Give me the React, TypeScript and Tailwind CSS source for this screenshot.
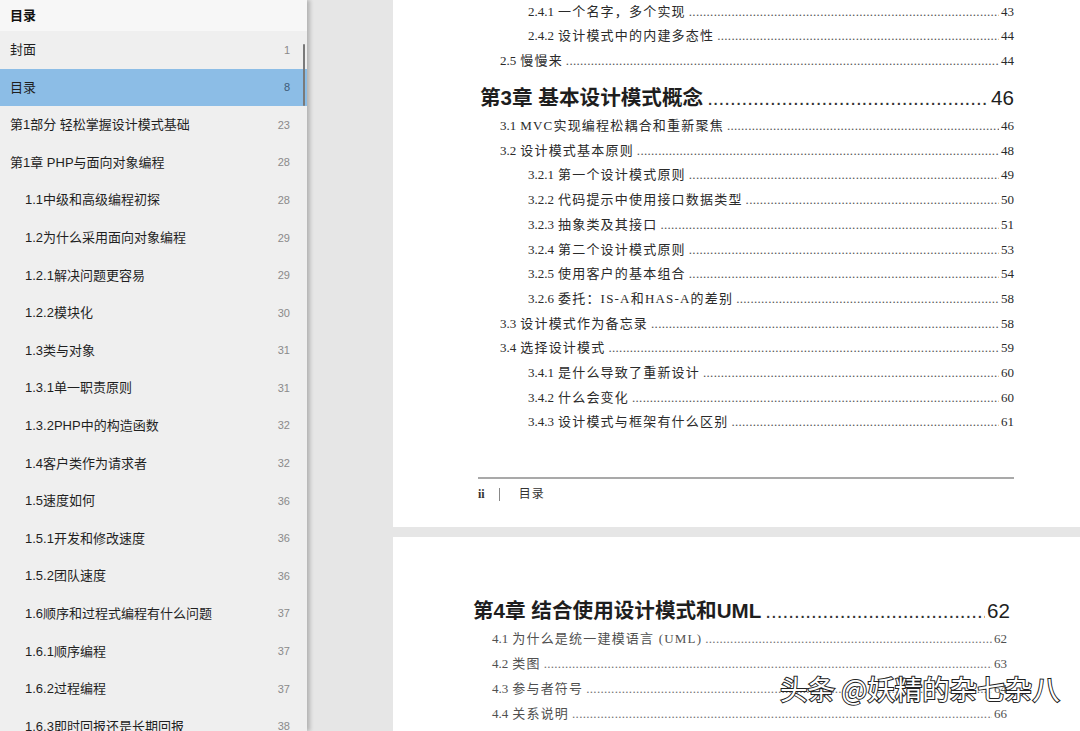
import React from "react";

const SANS = "font-['Segoe_UI','Liberation_Sans','Noto_Sans_CJK_SC',sans-serif]";
const SERIF = "font-['Liberation_Serif','Noto_Sans_CJK_SC',serif]";

const outline = [
  { title: "封面", page: 1, level: 0 },
  { title: "目录", page: 8, level: 0, active: true },
  { title: "第1部分 轻松掌握设计模式基础", page: 23, level: 0 },
  { title: "第1章 PHP与面向对象编程", page: 28, level: 0 },
  { title: "1.1中级和高级编程初探", page: 28, level: 1 },
  { title: "1.2为什么采用面向对象编程", page: 29, level: 1 },
  { title: "1.2.1解决问题更容易", page: 29, level: 1 },
  { title: "1.2.2模块化", page: 30, level: 1 },
  { title: "1.3类与对象", page: 31, level: 1 },
  { title: "1.3.1单一职责原则", page: 31, level: 1 },
  { title: "1.3.2PHP中的构造函数", page: 32, level: 1 },
  { title: "1.4客户类作为请求者", page: 32, level: 1 },
  { title: "1.5速度如何", page: 36, level: 1 },
  { title: "1.5.1开发和修改速度", page: 36, level: 1 },
  { title: "1.5.2团队速度", page: 36, level: 1 },
  { title: "1.6顺序和过程式编程有什么问题", page: 37, level: 1 },
  { title: "1.6.1顺序编程", page: 37, level: 1 },
  { title: "1.6.2过程编程", page: 37, level: 1 },
  { title: "1.6.3即时回报还是长期回报", page: 38, level: 1 },
];

const DOTS = ".".repeat(200);

type Entry = { num: string; title: string; page: number; level: number };

const page1: Entry[] = [
  { num: "2.4.1", title: "一个名字，多个实现", page: 43, level: 2 },
  { num: "2.4.2", title: "设计模式中的内建多态性", page: 44, level: 2 },
  { num: "2.5", title: "慢慢来", page: 44, level: 1 },
];

const page1b: Entry[] = [
  { num: "3.1", title: "MVC实现编程松耦合和重新聚焦", page: 46, level: 1 },
  { num: "3.2", title: "设计模式基本原则", page: 48, level: 1 },
  { num: "3.2.1", title: "第一个设计模式原则", page: 49, level: 2 },
  { num: "3.2.2", title: "代码提示中使用接口数据类型", page: 50, level: 2 },
  { num: "3.2.3", title: "抽象类及其接口", page: 51, level: 2 },
  { num: "3.2.4", title: "第二个设计模式原则", page: 53, level: 2 },
  { num: "3.2.5", title: "使用客户的基本组合", page: 54, level: 2 },
  { num: "3.2.6", title: "委托：IS-A和HAS-A的差别", page: 58, level: 2 },
  { num: "3.3", title: "设计模式作为备忘录", page: 58, level: 1 },
  { num: "3.4", title: "选择设计模式", page: 59, level: 1 },
  { num: "3.4.1", title: "是什么导致了重新设计", page: 60, level: 2 },
  { num: "3.4.2", title: "什么会变化", page: 60, level: 2 },
  { num: "3.4.3", title: "设计模式与框架有什么区别", page: 61, level: 2 },
];

const page2: Entry[] = [
  { num: "4.1", title: "为什么是统一建模语言 (UML)", page: 62, level: 1 },
  { num: "4.2", title: "类图", page: 63, level: 1 },
  { num: "4.3", title: "参与者符号", page: 64, level: 1 },
  { num: "4.4", title: "关系说明", page: 66, level: 1 },
];

const TocLine = ({ e, indent, h }: { e: Entry; indent: string; h: string }) => (
  <div className={`flex items-center ${h} ${indent} ${SERIF} text-[13px]`}>
    <span className="whitespace-nowrap">{e.num}</span>
    <span className="ml-[4px] whitespace-nowrap tracking-[1.2px]">{e.title}</span>
    <span className="ml-[3px] mr-[2px] w-0 min-w-0 flex-1 overflow-hidden whitespace-nowrap opacity-80 tracking-[0.3px]">
      {DOTS}
    </span>
    <span className="whitespace-nowrap">{e.page}</span>
  </div>
);

const Heading = ({ label, page, className }: { label: string; page: number; className: string }) => (
  <div className={`flex items-center h-[30px] ${className} font-['Liberation_Sans','Noto_Sans_CJK_SC',sans-serif] text-[20.6px] font-bold text-[#1e1e1e]`}>
    <span className="whitespace-nowrap">{label}</span>
    <span className="ml-[4px] mr-[2px] w-0 min-w-0 flex-1 overflow-hidden whitespace-nowrap font-normal text-[#333]">{DOTS}</span>
    <span className="whitespace-nowrap font-normal">{page}</span>
  </div>
);

export default function App() {
  return (
    <div className="flex h-[731px] w-[1080px] overflow-hidden bg-[#e6e6e6]">
      {/* Sidebar outline */}
      <aside className={`relative z-10 w-[307px] shrink-0 overflow-hidden bg-[#efefef] shadow-[3px_0_4px_rgba(0,0,0,0.22)] ${SANS}`}>
        <div className="flex h-[31px] items-center bg-[#f7f7f7] pl-[10px] text-[13px] font-bold text-[#111]">
          目录
        </div>
        {outline.map((item) => (
          <div
            key={item.title}
            className={`flex h-[37.6px] items-center pr-[17px] ${item.level ? "pl-[25px]" : "pl-[10px]"} ${
              item.active ? "bg-[#8cbde6]" : ""
            }`}
          >
            <span className="flex-1 whitespace-nowrap text-[13px] text-[#1f1f1f]">{item.title}</span>
            <span className={`text-[11px] ${item.active ? "text-[#3d5b78]" : "text-[#8a8a8a]"}`}>{item.page}</span>
          </div>
        ))}
        <div className="absolute right-[2px] top-[44px] h-[62px] w-[2px] rounded-full bg-[#7a7a7a]" />
      </aside>

      {/* Document view */}
      <main className="relative flex min-w-0 flex-1 flex-col gap-[10px] pl-[86px]">
        <section className="flex h-[527px] flex-col bg-white pr-[66px] text-[#2a2a2a]">
          <div className="mt-[-1px]">
            {page1.map((e) => (
              <TocLine key={e.num} e={e} h="h-[24.5px]" indent={e.level === 2 ? "pl-[135px]" : "pl-[107px]"} />
            ))}
          </div>
          <Heading label="第3章 基本设计模式概念" page={46} className="mt-[11px] pl-[87px]" />
          {page1b.map((e) => (
            <TocLine key={e.num} e={e} h="h-[24.7px]" indent={e.level === 2 ? "pl-[135px]" : "pl-[107px]"} />
          ))}
          <div className="ml-[85px] mt-[43px] h-[2px] bg-[#a9a9a9]" />
          <div className={`ml-[85px] mt-[5px] flex h-[20px] items-center ${SERIF} text-[12px] text-[#333]`}>
            <span className="font-bold">ii</span>
            <span className="ml-[14px] h-[13px] w-px bg-[#888]" />
            <span className="ml-[19px] tracking-[1px]">目录</span>
          </div>
        </section>

        <section className="flex flex-1 flex-col bg-white pr-[70px]">
          <Heading label="第4章 结合使用设计模式和UML" page={62} className="mt-[59px] pl-[80px]" />
          <div className="pr-[3px] text-[#505050]">
            {page2.map((e) => (
              <TocLine key={e.num} e={e} h="h-[25px]" indent="pl-[99px]" />
            ))}
          </div>
        </section>

        <div className="absolute bottom-[22px] left-[473px] whitespace-nowrap font-['Noto_Sans_CJK_SC',sans-serif] text-[27.5px] text-white [paint-order:stroke_fill] [-webkit-text-stroke:2px_#222]">
          头条 @妖精的杂七杂八
        </div>
      </main>
    </div>
  );
}
